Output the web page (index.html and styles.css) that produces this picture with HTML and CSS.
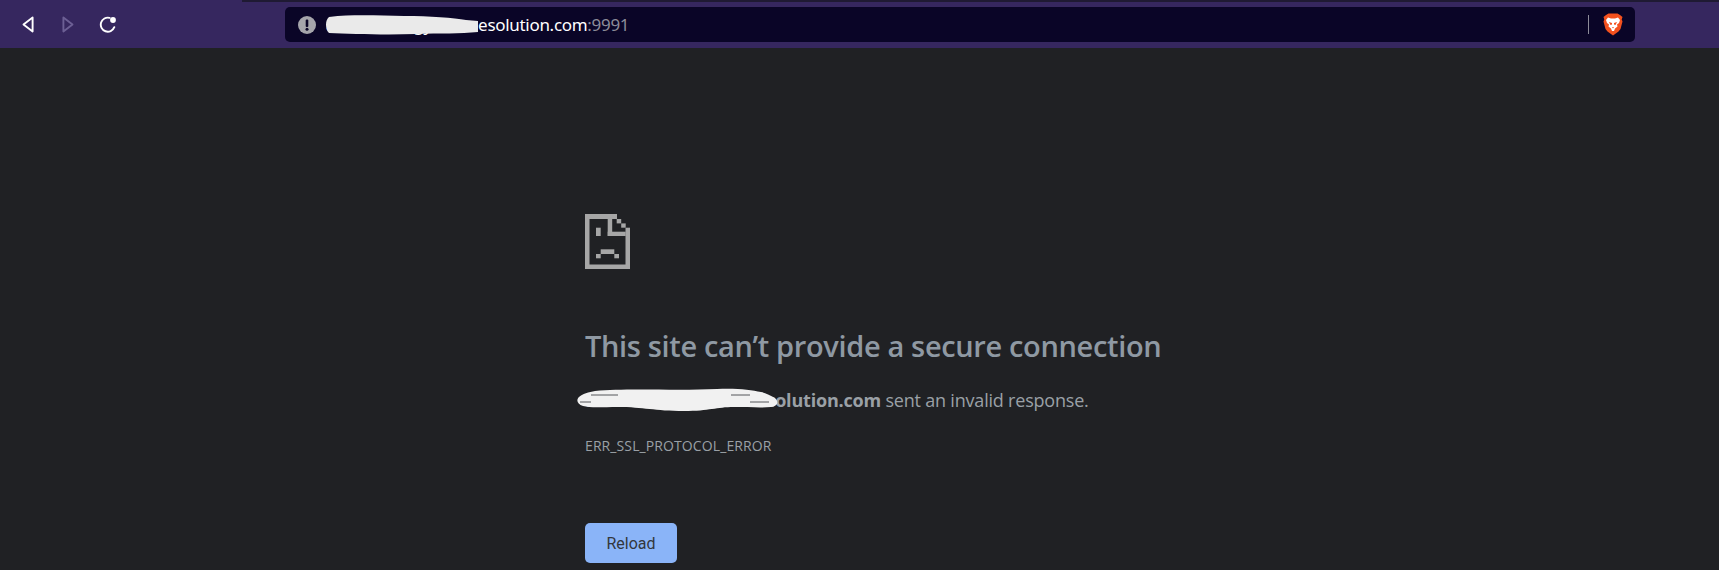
FILE: index.html
```html
<!DOCTYPE html>
<html lang="en">
<head>
<meta charset="utf-8">
<title>Privacy error</title>
<link rel="stylesheet" href="styles.css">
</head>
<body>
<header class="toolbar">
  <div class="tabstrip"><span class="tabstrip-edge"></span></div>
  <div class="toolbar-row">
    <nav class="nav-buttons">
      <svg class="nav-icon" viewBox="0 0 12 17" aria-label="Back"><path d="M10.600 1.500 1.500 8.500l9.100 7z" fill="none" stroke="#fff" stroke-width="1.900" stroke-linejoin="round"/></svg>
      <svg class="nav-icon" viewBox="0 0 12 17" aria-label="Forward"><path d="M1.400 1.500 10.500 8.500l-9.100 7z" fill="none" stroke="#6c5f94" stroke-width="1.900" stroke-linejoin="round"/></svg>
      <svg class="nav-icon nav-reload" viewBox="0 0 17 17" aria-label="Reload"><path d="M15.300 11.200A7 7 0 1 1 10.600 1.900" fill="none" stroke="#fff" stroke-width="1.900" stroke-linecap="round"/><circle cx="14" cy="4" r="2.900" fill="#fff"/></svg>
    </nav>
    <div class="address">
      <svg class="alert" viewBox="0 0 18 18" aria-label="Not secure"><circle cx="9" cy="9" r="9" fill="#a5a5ab"/><rect x="7.700" y="3.500" width="2.600" height="7.500" rx="1" fill="#0a0527"/><circle cx="9" cy="13.300" r="1.500" fill="#0a0527"/></svg>
      <span class="url-wrap">
        <span class="url">aaaaaaaaa.gyaaaaaesolution.com<span class="port">:9991</span></span>
        <svg class="scribble scribble-url" viewBox="0 0 157 20"><path d="M3 2C30-1 55 1 78 1c26 0 50 2 62 4l12 1v11c-18 2-38 1-62 2C60 20 25 19 3 18C-1 14-1 5 3 2z" fill="#eaeaea"/></svg>
      </span>
      <span class="spacer"></span>
      <span class="divider"></span>
      <svg class="brave" viewBox="0 0 20 23" aria-label="Brave Shields">
        <path d="M5.500 0.500h9l2.500 1.500 2.500 2-.8 2.500.8 2-2 7.500-2 2.500L10 22.500 4.500 18.500l-2-2.500-2-7.500.8-2-.8-2.500L3 2z" fill="#f4511e"/>
        <path d="M5 4.500 8 5.500h4l3-1 2 2.500-1 3-2 1.500.5 2-2.500 2-1 2.500h-1-1l-1-2.500-2.500-2 .5-2-2-1.500-1-3z" fill="#fff"/>
        <path d="M6 9 9 10v1.500l-1.500.5zM14 9 11 10v1.500l1.500.5zM9 14h2l-1 1.500z" fill="#f4511e"/>
      </svg>
    </div>
  </div>
</header>
<main class="page">
  <div class="content">
    <svg class="sad-page" viewBox="0 0 45 55" aria-hidden="true">
      <g fill="#a6a6a6">
        <rect x="0" y="0" width="4.500" height="55"/>
        <rect x="0" y="0" width="32" height="5"/>
        <rect x="0" y="50.500" width="45" height="4.500"/>
        <rect x="40.500" y="13.700" width="4.500" height="41.300"/>
        <rect x="22.700" y="0" width="4.500" height="22"/>
        <rect x="22.700" y="17.700" width="18" height="4.300"/>
        <rect x="31.700" y="5" width="4.500" height="4.400"/>
        <rect x="36.200" y="9.400" width="4.500" height="4.300"/>
        <rect x="11" y="13.700" width="4.700" height="8.300"/>
        <rect x="15.700" y="35.300" width="13.600" height="4.700"/>
        <rect x="11" y="40" width="4.700" height="4.300"/>
        <rect x="29.300" y="40" width="4.700" height="4.300"/>
      </g>
    </svg>
    <h1 class="title">This site can’t provide a secure connection</h1>
    <p class="summary">
      <span class="host-wrap">
        <strong class="host">aaaaaaaaaaaaaaaaasolution.com</strong>
        <svg class="scribble scribble-host" viewBox="0 0 201 24">
          <path d="M18 3C50 0 100 3 140 1c20-1 34 1 44 3 5 1 8 3 14 6 4 4 3 8-4 9-11 1-21 0-37 0-18 0-24 4-50 4-30 0-40-4-66-4-16 0-28 1-35-1C0 16-1 12 2 9c3-3 10-5 16-6z" fill="#f1f1f1"/>
          <path d="M14 7h27M154 7h19M3 14h11M173 14h19" fill="none" stroke="#55565a" stroke-width="1"/>
        </svg>
      </span>
      sent an invalid response.
    </p>
    <p class="code">ERR_SSL_PROTOCOL_ERROR</p>
    <button class="reload" type="button">Reload</button>
  </div>
</main>
</body>
</html>
```
FILE: styles.css
```css
* { box-sizing: border-box; }
html, body { margin: 0; height: 100%; overflow: hidden; }
body {
  background: #202124;
  display: flex;
  flex-direction: column;
  font-family: "Open Sans", "Noto Sans", "Liberation Sans", sans-serif;
}
.toolbar { background: #36275f; height: 48px; flex: none; }
.tabstrip { height: 2px; background: #1f1a33; }
.tabstrip-edge { display: block; width: 242px; height: 2px; background: #36275f; }
.toolbar-row { display: flex; align-items: center; height: 35px; margin-top: 5px; padding-left: 22px; }
.nav-buttons { display: flex; align-items: center; width: 263px; gap: 28px; }
.nav-icon { width: 12px; height: 17px; display: block; }
.nav-reload { width: 17px; margin-left: -3px; }
.address {
  width: 1350px; height: 35px; background: #0a0527; border-radius: 5px;
  display: flex; align-items: center; padding: 0 12px 0 13px;
}
.alert { width: 18px; height: 18px; flex: none; }
.url-wrap { position: relative; margin-left: 10px; display: block; }
.url { color: #fff; font-size: 17px; font-family: "Noto Sans", sans-serif; letter-spacing: -0.300px; white-space: nowrap; }
.port { color: #8d8c99; }
.scribble { position: absolute; display: block; }
.scribble-url { left: 0; top: 2px; width: 157px; height: 20px; }
.spacer { flex: 1; }
.divider { width: 1px; height: 19px; background: #8d8c99; margin-right: 14px; }
.brave { width: 20px; height: 23px; flex: none; }
.page { flex: 1; padding: 166px 0 0 585px; }
.content { width: 640px; }
.sad-page { width: 45px; height: 55px; display: block; }
.title { margin: 58px 0 0; font-size: 29px; line-height: 38px; font-weight: 600; letter-spacing: -0.350px; color: #8f99a3; white-space: nowrap; }
.summary { margin: 21px 0 0; font-size: 18px; line-height: 28px; letter-spacing: -0.200px; color: #9aa0a6; white-space: nowrap; }
.host-wrap { position: relative; }
.host { font-weight: 700; }
.scribble-host { left: -8px; top: 0; width: 201px; height: 24px; }
.code { margin: 23px 0 0; font-size: 14px; line-height: 18px; letter-spacing: 0.100px; color: #9aa0a6; }
.reload {
  display: block; margin-top: 68px; width: 92px; height: 40px;
  background: #8ab4f8; border: 0; border-radius: 5px;
  color: #33373d; font: 400 16px "Roboto", sans-serif;
}
```
